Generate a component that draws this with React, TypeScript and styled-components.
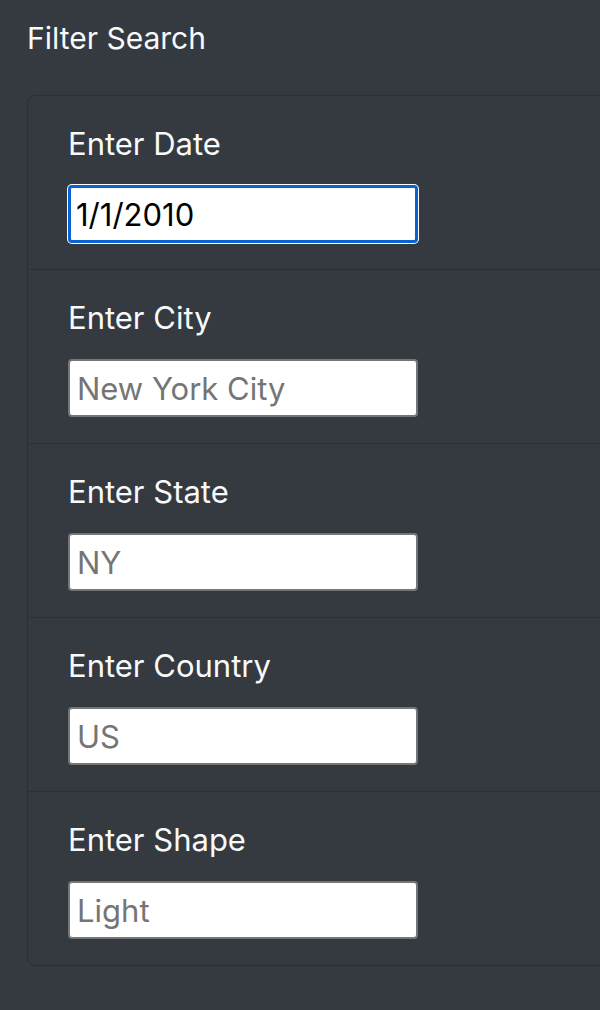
import styled, { createGlobalStyle } from 'styled-components';

const GlobalStyle = createGlobalStyle`
  html, body {
    margin: 0;
    padding: 0;
    background: #343a40;
  }
  body {
    font-family: Inter, "Noto Sans", "Liberation Sans", sans-serif;
    overflow: hidden;
  }
`;

const filters = [
  { id: 'datetime', label: 'Enter Date', value: '1/1/2010', placeholder: '1/1/2010', active: true },
  { id: 'city', label: 'Enter City', value: '', placeholder: 'New York City', active: false },
  { id: 'state', label: 'Enter State', value: '', placeholder: 'NY', active: false },
  { id: 'country', label: 'Enter Country', value: '', placeholder: 'US', active: false },
  { id: 'shape', label: 'Enter Shape', value: '', placeholder: 'Light', active: false },
];

const App = () => {
  return (
    <Page>
      <GlobalStyle />
      <Title>Filter Search</Title>
      <Card>
        {filters.map((filter) => (
          <FilterRow key={filter.id}>
            <Label htmlFor={filter.id}>{filter.label}</Label>
            <Input
              id={filter.id}
              type="text"
              readOnly
              value={filter.value}
              placeholder={filter.placeholder}
              $active={filter.active}
            />
          </FilterRow>
        ))}
      </Card>
    </Page>
  );
};

export default App;

const Page = styled.div`
  width: 600px;
  height: 1010px;
  padding-left: 27px;
  box-sizing: border-box;
  overflow: hidden;
  color: #f8f9fa;
`;
const Title = styled.h5`
  margin: 0;
  padding-top: 17px;
  font-size: 30px;
  font-weight: 400;
  line-height: 42px;
`;
const Card = styled.ul`
  list-style: none;
  margin: 36px 0 0;
  padding: 0;
  width: 640px;
  border: 1px solid #2b3035;
  border-radius: 8px;
`;
const FilterRow = styled.li`
  display: flex;
  flex-direction: column;
  align-items: flex-start;
  padding: 27px 40px 26px;
  border-bottom: 1px solid #2b3035;

  &:last-child {
    border-bottom: none;
  }
`;
const Label = styled.label`
  font-size: 31px;
  line-height: 42px;
  margin-bottom: 20px;
`;
const Input = styled.input<{ $active: boolean }>`
  box-sizing: border-box;
  width: 350px;
  height: 58px;
  margin: 0;
  padding: 0 7px;
  font-family: inherit;
  font-size: 31px;
  color: #000;
  background: #fff;
  border-radius: 4px;
  outline: none;
  border: ${({ $active }) => ($active ? '3px solid #0b63d1' : '2px solid #767676')};
  box-shadow: ${({ $active }) => ($active ? '0 0 0 1px #ffffff' : 'none')};
  padding-left: ${({ $active }) => ($active ? '5px' : '7px')};

  &::placeholder {
    color: #757575;
  }
`;
